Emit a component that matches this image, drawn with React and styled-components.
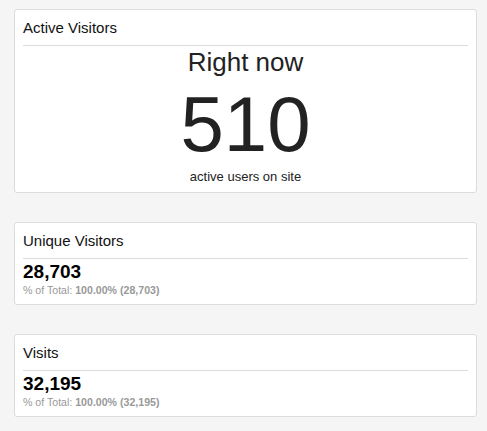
import styled, { createGlobalStyle } from "styled-components";

const GlobalStyle = createGlobalStyle`
  body {
    margin: 0;
    background-color: #f5f5f5;
    font-family: "Liberation Sans", Arial, Helvetica, sans-serif;
    color: #222;
  }
`;

const Page = styled.div`
  padding: 9px 10px 14px 14px;
  display: flex;
  flex-direction: column;
  gap: 29px;
`;
const Card = styled.div`
  background-color: #fff;
  border: 1px solid #dcdcdc;
  border-radius: 3px;
  padding: 0 8px 7px;
`;
const CardTitle = styled.div`
  font-size: 15px;
  line-height: 18px;
  padding: 9px 0 8px;
  border-bottom: 1px solid #dcdcdc;
  color: #111;
`;
const Realtime = styled.div`
  display: flex;
  flex-direction: column;
  align-items: center;
  color: #222;
`;
const Heading = styled.div`
  font-size: 26px;
  line-height: 30px;
  margin-top: 1px;
`;
const BigNumber = styled.div`
  font-size: 78px;
  line-height: 80px;
  margin-top: 7px;
`;
const Caption = styled.div`
  font-size: 13px;
  line-height: 16px;
  margin-top: 5px;
`;
const Value = styled.div`
  font-size: 19px;
  line-height: 22px;
  font-weight: bold;
  color: #000;
  margin-top: 2px;
`;
const Total = styled.div`
  font-size: 10.6px;
  line-height: 13px;
  color: #999;
  margin-top: 1px;
  b {
    font-weight: bold;
  }
`;

const metrics = [
  { title: "Unique Visitors", value: "28,703" },
  { title: "Visits", value: "32,195" },
];

const App = () => {
  return (
    <>
      <GlobalStyle />
      <Page>
        <Card>
          <CardTitle>Active Visitors</CardTitle>
          <Realtime>
            <Heading>Right now</Heading>
            <BigNumber>510</BigNumber>
            <Caption>active users on site</Caption>
          </Realtime>
        </Card>
        {metrics.map((m) => (
          <Card key={m.title}>
            <CardTitle>{m.title}</CardTitle>
            <Value>{m.value}</Value>
            <Total>
              % of Total: <b>100.00% ({m.value})</b>
            </Total>
          </Card>
        ))}
      </Page>
    </>
  );
};

export default App;
